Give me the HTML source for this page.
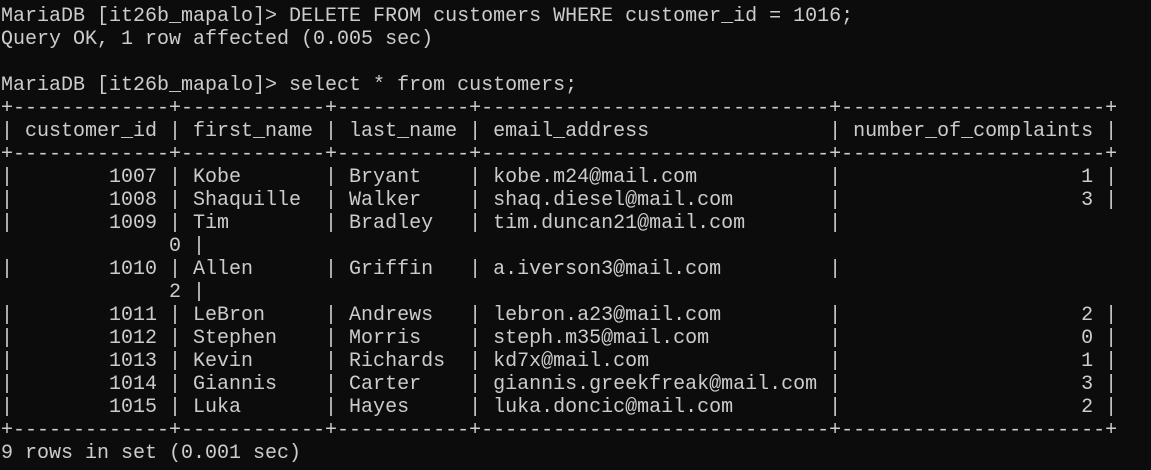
<!DOCTYPE html>
<html><head><meta charset="utf-8"><style>
html,body{margin:0;padding:0;background:#0c0c0c;width:1151px;height:470px;overflow:hidden}
pre{margin:0;padding:5px 0 0 1px;font-family:"Liberation Mono",monospace;font-size:20px;line-height:23px;color:#cccccc;white-space:pre}
</style></head><body><pre>MariaDB [it26b_mapalo]&gt; DELETE FROM customers WHERE customer_id = 1016;
Query OK, 1 row affected (0.005 sec)

MariaDB [it26b_mapalo]&gt; select * from customers;
+-------------+------------+-----------+-----------------------------+----------------------+
| customer_id | first_name | last_name | email_address               | number_of_complaints |
+-------------+------------+-----------+-----------------------------+----------------------+
|        1007 | Kobe       | Bryant    | kobe.m24@mail.com           |                    1 |
|        1008 | Shaquille  | Walker    | shaq.diesel@mail.com        |                    3 |
|        1009 | Tim        | Bradley   | tim.duncan21@mail.com       |
              0 |
|        1010 | Allen      | Griffin   | a.iverson3@mail.com         |
              2 |
|        1011 | LeBron     | Andrews   | lebron.a23@mail.com         |                    2 |
|        1012 | Stephen    | Morris    | steph.m35@mail.com          |                    0 |
|        1013 | Kevin      | Richards  | kd7x@mail.com               |                    1 |
|        1014 | Giannis    | Carter    | giannis.greekfreak@mail.com |                    3 |
|        1015 | Luka       | Hayes     | luka.doncic@mail.com        |                    2 |
+-------------+------------+-----------+-----------------------------+----------------------+
9 rows in set (0.001 sec)</pre></body></html>
